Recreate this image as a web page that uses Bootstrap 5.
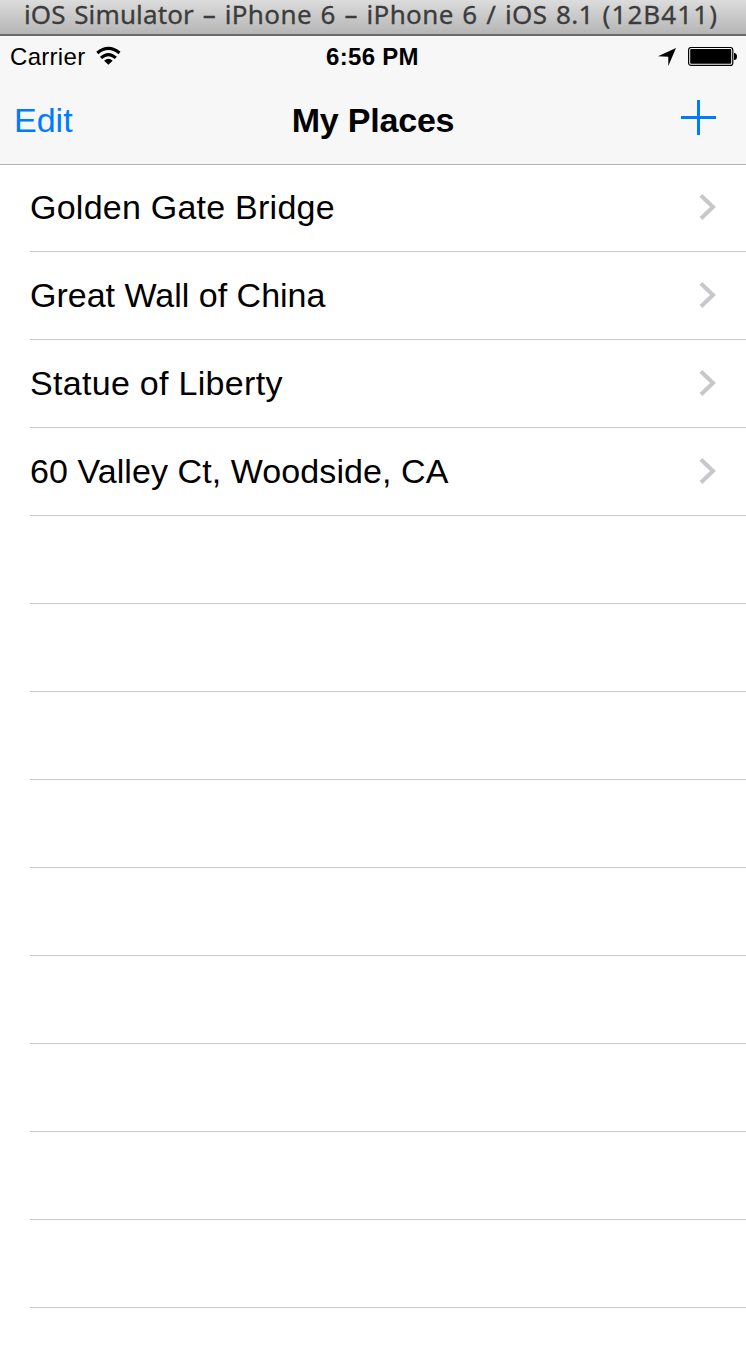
<!DOCTYPE html>
<html lang="en">
<head>
<meta charset="utf-8">
<meta name="viewport" content="width=device-width, initial-scale=1">
<title>My Places</title>
<link href="https://cdn.jsdelivr.net/npm/bootstrap@5.3.0/dist/css/bootstrap.min.css" rel="stylesheet">
<style>
  body { font-family: "Liberation Sans", Arial, sans-serif; color: #000; background: #fff; }
  .window-title { height: 36px; padding-left: 24px; line-height: 28px; background: linear-gradient(#dcdcdc, #b5b5b5); border-bottom: 2px solid #6a6a6a; color: #3c3c3c; font-family: "Noto Sans", sans-serif; font-size: 26px; letter-spacing: .38px; word-spacing: 1.5px; -webkit-text-stroke: .3px #3c3c3c; }
  .app-name { letter-spacing: .15px; }
  .build { letter-spacing: 1.1px; }
  .top-area { height: 129px; background: #f7f7f7; border-bottom: 1px solid #b2b2b2; }
  .status-bar { height: 42px; padding: 0 9px 0 10px; font-size: 24px; line-height: 42px; letter-spacing: .3px; }
  .clock { margin-right: 2px; }
  .wifi { margin-left: 10px; }
  .battery { margin-left: 11px; }
  .title-bar { height: 86px; padding: 0 14px; font-size: 34px; line-height: 84px; }
  .title-bar .label { line-height: 82px; margin-bottom: 2px; }
  .heading { letter-spacing: -.2px; }
  .add-icon { margin: 0 16px 8px 0; }
  .side { flex: 1 1 0; }
  .tint { color: #007aff; }
  .place { height: 88px; margin-left: 30px; padding: 0 30px 0 0; border: 0; color: #000; background: #fff; font-size: 34px; line-height: 85px; letter-spacing: .24px; box-shadow: inset 0 -1px #c8c7cc; }
  .place span { margin-bottom: 2px; }
  .place:first-child { height: 87px; align-items: flex-start !important; }
  .place:nth-child(2) { letter-spacing: 0; }
  .place:nth-child(3) { letter-spacing: .3px; }
  .place:nth-child(4) { letter-spacing: .08px; }
  .place svg { margin-bottom: 2px; }
  .place:first-child svg { margin-top: 29px; }
  svg { display: block; flex: none; }
</style>
</head>
<body>
<div class="window-title text-nowrap"><span class="app-name">iOS Simulator</span> – iPhone 6 – iPhone 6 / iOS 8.1 <span class="build">(12B411)</span></div>
<header class="top-area">
  <div class="status-bar d-flex align-items-center">
    <div class="side d-flex align-items-center">
      <span>Carrier</span>
      <svg class="wifi" width="27" height="24" viewBox="0 0 27 24"><g fill="none" stroke="#000" stroke-width="3.2"><path d="M2.3 8Q13.4 -1.2 24.5 8"/><path d="M6 12.9Q13.4 6.2 20.8 12.9"/></g><path d="M9.1 15.7Q13.4 12 17.7 15.7L13.4 19.7Z"/></svg>
    </div>
    <span class="clock fw-bold">6:56 PM</span>
    <div class="side d-flex align-items-center justify-content-end">
      <svg width="20" height="20" viewBox="0 0 20 20"><path d="M19 1L11.3 19V9.8L1 9.2Z"/></svg>
      <svg class="battery" width="49" height="20" viewBox="0 0 49 20"><rect x=".6" y=".5" width="44.2" height="17.9" rx="2.5" fill="none" stroke="#000" stroke-width="1.2"/><rect x="2.2" y="2.1" width="41" height="14.7" rx="1"/><path d="M46 6Q49 6 49 9.5T46 13Z"/></svg>
    </div>
  </div>
  <nav class="title-bar d-flex align-items-center">
    <span class="side label tint">Edit</span>
    <span class="heading label fw-bold">My Places</span>
    <span class="side d-flex justify-content-end"><svg class="add-icon" width="35" height="35" viewBox="0 0 35 35"><path d="M0 17.5H35M17.5 0V35" stroke="#007aff" stroke-width="3"/></svg></span>
  </nav>
</header>
<main class="list-group rounded-0" id="places"></main>
<script src="https://cdn.jsdelivr.net/npm/bootstrap@5.3.0/dist/js/bootstrap.bundle.min.js"></script>
<script>
  const names = ["Golden Gate Bridge", "Great Wall of China", "Statue of Liberty", "60 Valley Ct, Woodside, CA"];
  const chevron = '<svg width="17" height="26" viewBox="0 0 17 26"><path d="M2 1.5L14 13L2 24.5" fill="none" stroke="#c7c7cc" stroke-width="4"/></svg>';
  document.getElementById("places").innerHTML = Array.from({ length: 13 }, (_, i) =>
    `<div class="place rounded-0 list-group-item d-flex align-items-center justify-content-between">${names[i] ? `<span>${names[i]}</span>${chevron}` : ""}</div>`
  ).join("");
</script>
</body>
</html>
